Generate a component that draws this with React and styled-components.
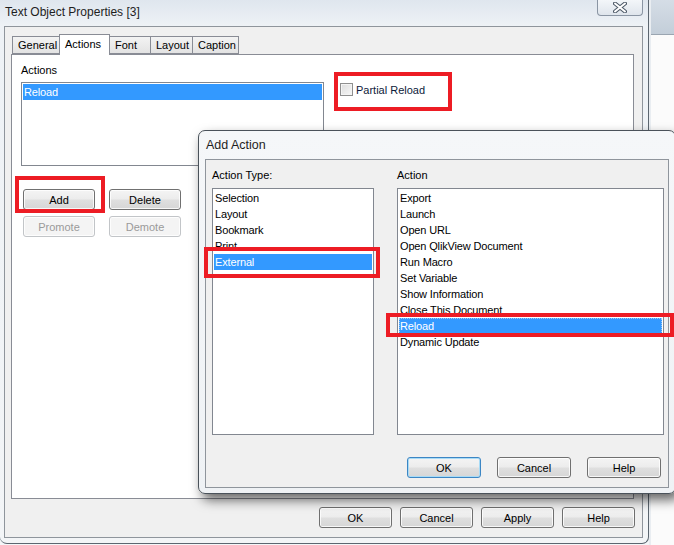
import React from 'react';
import styled, { createGlobalStyle } from 'styled-components';

const GlobalStyle = createGlobalStyle`
  html, body { margin: 0; padding: 0; overflow: hidden; background: #fff; }
  * { box-sizing: border-box; }
`;

const uiFont = `"Liberation Sans", Arial, sans-serif`;

const Screen = styled.div`
  position: relative;
  width: 674px;
  height: 545px;
  display: flex;
  overflow: hidden;
  font-family: ${uiFont};
  font-size: 11px;
  color: #000;
  background: #f4f6f8;
`;

const MainWindow = styled.div`
  width: 649px;
  height: 544px;
  display: flex;
  flex-direction: column;
  background: linear-gradient(#dfe6ee 0px, #eef2f6 26px, #f3f5f7 100%);
  border-right: 1px solid #5c6670;
  border-bottom: 1px solid #5c6670;
  border-radius: 0 0 7px 7px;
  flex-shrink: 0;
`;

const TitleBar = styled.div`
  height: 26px;
  display: flex;
  align-items: flex-start;
  justify-content: space-between;
  padding-left: 5px;
  padding-right: 5px;
`;

const Title = styled.span`
  font-family: ${uiFont};
  font-size: 12px;
  line-height: 13px;
  margin-top: 6px;
  color: #1e1e1e;
`;

const CloseButton = styled.div`
  width: 46px;
  height: 16px;
  border: 1px solid #8a95a3;
  border-top: none;
  border-radius: 0 0 4px 4px;
  background: linear-gradient(#f3f6f9, #dfe5ec);
  display: flex;
  align-items: center;
  justify-content: center;
`;

const Client = styled.div`
  margin-left: 4px;
  width: 639px;
  height: 512px;
  border: 1px solid #8f959c;
  background: #f0f0f0;
  display: flex;
  flex-direction: column;
`;

const TabStrip = styled.div`
  height: 27px;
  display: flex;
  align-items: flex-end;
  padding-left: 8px;
  position: relative;
  z-index: 1;
`;

const Tab = styled.div`
  width: ${p => p.$w}px;
  height: ${p => (p.$active ? 21 : 18)}px;
  margin-bottom: ${p => (p.$active ? -1 : 0)}px;
  border: 1px solid #898c95;
  border-bottom: ${p => (p.$active ? 'none' : '1px solid #898c95')};
  margin-left: -1px;
  background: ${p => (p.$active ? '#fff' : 'linear-gradient(#f3f3f3, #e3e3e3)')};
  padding-left: 5px;
  padding-top: ${p => (p.$active ? 3 : 2)}px;
  font-size: 11px;
  line-height: 13px;
  color: #000;
  white-space: nowrap;
`;

const TabPanel = styled.div`
  margin: 0 8px 0 6px;
  height: 445px;
  border: 1px solid #898c95;
  background: #fff;
  padding: 9px 0 0 9px;
`;

const TopArea = styled.div`
  display: flex;
  align-items: flex-start;
  gap: 16px;
`;

const Field = styled.div`
  display: flex;
  flex-direction: column;
`;

const Label = styled.div`
  height: 18px;
  line-height: 13px;
  font-size: 11px;
`;

const ListBox = styled.div`
  width: ${p => p.$w}px;
  height: ${p => p.$h}px;
  border: 1px solid #828790;
  background: #fff;
  padding: 1px;
`;

const ListItem = styled.div`
  height: 16px;
  line-height: 16px;
  padding-left: 1px;
  font-size: 11px;
  letter-spacing: -0.15px;
  white-space: nowrap;
  background: ${p => (p.$selected ? '#3399ff' : 'transparent')};
  color: ${p => (p.$selected ? '#fff' : '#000')};
  outline: ${p => (p.$focus ? '1px dotted #a0c8f0' : 'none')};
  outline-offset: -1px;
`;

const CheckRow = styled.label`
  display: flex;
  align-items: center;
  gap: 3px;
  margin-top: 19px;
  font-size: 11px;
  color: #0d1a3a;
`;

const CheckBox = styled.span`
  width: 13px;
  height: 13px;
  border: 1px solid #8f8f8f;
  background: linear-gradient(135deg, #dcdcdc, #f8f8f8);
  box-shadow: inset 0 0 0 1px #f4f4f4;
`;

const ButtonGrid = styled.div`
  display: grid;
  grid-template-columns: 72px 72px;
  column-gap: 14px;
  row-gap: 6px;
  margin: 23px 0 0 2px;
`;

const Button = styled.button`
  width: ${p => p.$w || 73}px;
  height: 21px;
  padding: 0;
  font-family: ${uiFont};
  font-size: 11px;
  color: ${p => (p.disabled ? '#9a9a9a' : '#000')};
  border: 1px solid ${p => (p.$focus ? '#3c86c4' : p.disabled ? '#c2c5c8' : '#707070')};
  border-radius: 3px;
  background: ${p =>
    p.disabled
      ? '#f4f4f4'
      : 'linear-gradient(#f4f4f4 0%, #ececec 48%, #dfdfdf 52%, #d6d6d6 100%)'};
  box-shadow: inset 0 0 0 1px ${p => (p.$focus ? '#a8dbf6' : 'rgba(255,255,255,0.8)')};
`;

const Footer = styled.div`
  display: flex;
  justify-content: flex-end;
  gap: 8px;
  padding: 8px 7px 0 0;
`;

const BackWindow = styled.div`
  flex: 1;
  display: flex;
  flex-direction: column;
  border-left: 2px solid #e9edf1;
`;

const BackTitle = styled.div`
  height: 35px;
  background: linear-gradient(#d5dde6, #c3ced9);
  border-bottom: 1px solid #9aa5b1;
`;

const BackBody = styled.div`
  flex: 1;
  background: #fbfbfb;
`;

const Dialog = styled.div`
  position: absolute;
  left: 198px;
  top: 130px;
  width: 478px;
  height: 364px;
  display: flex;
  flex-direction: column;
  background: linear-gradient(#f5f7f9, #eff2f5);
  border: 1px solid #4a525a;
  border-radius: 7px;
  box-shadow: 4px 6px 12px rgba(0, 0, 0, 0.6);
  z-index: 5;
`;

const DialogTitle = styled.div`
  height: 28px;
  padding: 8px 0 0 7px;
  font-size: 12.5px;
  line-height: 13px;
  color: #1e1e1e;
`;

const DialogPanel = styled.div`
  margin: 0 6px 0 6px;
  height: 329px;
  border: 1px solid #8f959c;
  background: #f0f0f0;
  padding: 8px 0 0 6px;
  display: flex;
  flex-direction: column;
`;

const DialogColumns = styled.div`
  display: flex;
  gap: 23px;
`;

const DialogLabel = styled(Label)`
  height: 20px;
  padding-top: 1px;
`;

const DialogButtons = styled.div`
  display: flex;
  justify-content: flex-end;
  gap: 16px;
  padding: 22px 7px 0 0;
`;

const Annotation = styled.div`
  position: absolute;
  left: ${p => p.$x}px;
  top: ${p => p.$y}px;
  width: ${p => p.$w}px;
  height: ${p => p.$h}px;
  border: 4px solid #ed1c24;
  z-index: 10;
  pointer-events: none;
`;

const CloseGlyph = () => (
  <svg width="14" height="11" viewBox="0 0 14 11">
    <path d="M2 1.5 L12 9.5 M12 1.5 L2 9.5" stroke="#4d5967" strokeWidth="4" strokeLinecap="round" />
    <path d="M2 1.5 L12 9.5 M12 1.5 L2 9.5" stroke="#ffffff" strokeWidth="2" strokeLinecap="round" />
  </svg>
);

const tabs = [
  { name: 'General', w: 48 },
  { name: 'Actions', w: 51, active: true },
  { name: 'Font', w: 42 },
  { name: 'Layout', w: 43 },
  { name: 'Caption', w: 47 },
];

const actionTypes = ['Selection', 'Layout', 'Bookmark', 'Print', 'External'];
const actions = [
  'Export',
  'Launch',
  'Open URL',
  'Open QlikView Document',
  'Run Macro',
  'Set Variable',
  'Show Information',
  'Close This Document',
  'Reload',
  'Dynamic Update',
];

export default function App() {
  return (
    <>
      <GlobalStyle />
      <Screen>
        <MainWindow>
          <TitleBar>
            <Title>Text Object Properties [3]</Title>
            <CloseButton>
              <CloseGlyph />
            </CloseButton>
          </TitleBar>
          <Client>
            <TabStrip>
              {tabs.map(t => (
                <Tab key={t.name} $w={t.w} $active={t.active}>
                  {t.name}
                </Tab>
              ))}
            </TabStrip>
            <TabPanel>
              <TopArea>
                <Field>
                  <Label>Actions</Label>
                  <ListBox $w={303} $h={84}>
                    <ListItem $selected>Reload</ListItem>
                  </ListBox>
                </Field>
                <CheckRow>
                  <CheckBox />
                  Partial Reload
                </CheckRow>
              </TopArea>
              <ButtonGrid>
                <Button $w={72}>Add</Button>
                <Button $w={72}>Delete</Button>
                <Button $w={72} disabled>Promote</Button>
                <Button $w={72} disabled>Demote</Button>
              </ButtonGrid>
            </TabPanel>
            <Footer>
              <Button>OK</Button>
              <Button>Cancel</Button>
              <Button>Apply</Button>
              <Button>Help</Button>
            </Footer>
          </Client>
        </MainWindow>
        <BackWindow>
          <BackTitle />
          <BackBody />
        </BackWindow>

        <Dialog>
          <DialogTitle>Add Action</DialogTitle>
          <DialogPanel>
            <DialogColumns>
              <Field>
                <DialogLabel>Action Type:</DialogLabel>
                <ListBox $w={162} $h={247}>
                  {actionTypes.map(a => (
                    <ListItem key={a} $selected={a === 'External'}>
                      {a}
                    </ListItem>
                  ))}
                </ListBox>
              </Field>
              <Field>
                <DialogLabel>Action</DialogLabel>
                <ListBox $w={267} $h={247}>
                  {actions.map(a => (
                    <ListItem key={a} $selected={a === 'Reload'} $focus={a === 'Reload'}>
                      {a}
                    </ListItem>
                  ))}
                </ListBox>
              </Field>
            </DialogColumns>
            <DialogButtons>
              <Button $w={74} $focus>OK</Button>
              <Button $w={74}>Cancel</Button>
              <Button $w={74}>Help</Button>
            </DialogButtons>
          </DialogPanel>
        </Dialog>

        <Annotation $x={334} $y={72} $w={118} $h={39} />
        <Annotation $x={15} $y={176} $w={90} $h={37} />
        <Annotation $x={204} $y={247} $w={176} $h={31} />
        <Annotation $x={386} $y={313} $w={288} $h={24} />
      </Screen>
    </>
  );
}
